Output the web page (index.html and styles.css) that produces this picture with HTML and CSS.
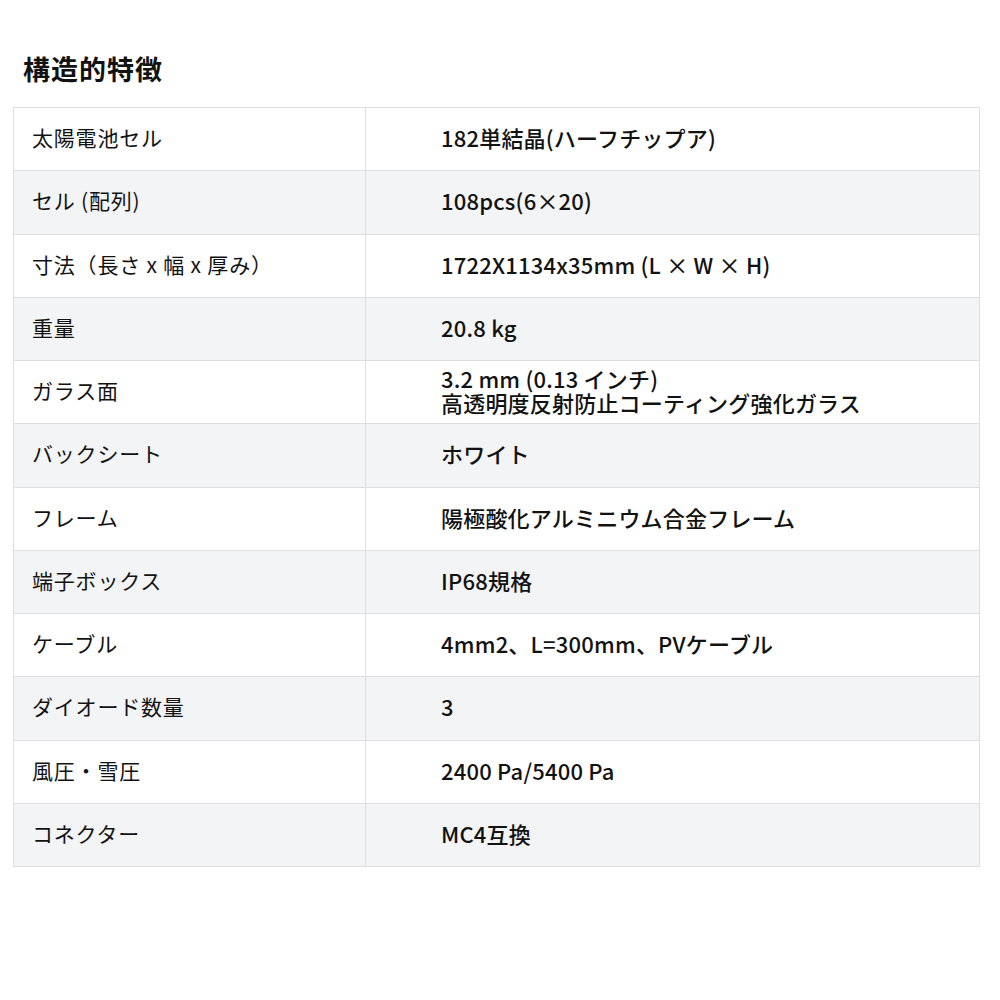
FILE: index.html
```html
<!DOCTYPE html>
<html lang="ja">
<head>
<meta charset="utf-8">
<link rel="stylesheet" href="styles.css">
</head>
<body>
<div class="page">
  <h1 class="title">構造的特徴</h1>
  <div class="spec">
    <div class="row"><div class="key">太陽電池セル</div><div class="val">182単結晶(ハーフチップア)</div></div>
    <div class="row alt"><div class="key">セル (配列)</div><div class="val">108pcs(6×20)</div></div>
    <div class="row"><div class="key">寸法（長さ x 幅 x 厚み）</div><div class="val">1722X1134x35mm (L × W × H)</div></div>
    <div class="row alt"><div class="key">重量</div><div class="val">20.8 kg</div></div>
    <div class="row"><div class="key">ガラス面</div><div class="val">3.2 mm (0.13 インチ)<br>高透明度反射防止コーティング強化ガラス</div></div>
    <div class="row alt"><div class="key">バックシート</div><div class="val">ホワイト</div></div>
    <div class="row"><div class="key">フレーム</div><div class="val">陽極酸化アルミニウム合金フレーム</div></div>
    <div class="row alt"><div class="key">端子ボックス</div><div class="val">IP68規格</div></div>
    <div class="row"><div class="key">ケーブル</div><div class="val">4mm2、L=300mm、PVケーブル</div></div>
    <div class="row alt"><div class="key">ダイオード数量</div><div class="val">3</div></div>
    <div class="row"><div class="key">風圧・雪圧</div><div class="val">2400 Pa/5400 Pa</div></div>
    <div class="row alt"><div class="key">コネクター</div><div class="val">MC4互換</div></div>
  </div>
</div>
</body>
</html>
```
FILE: styles.css
```css
html, body {
  margin: 0;
  padding: 0;
  background: #ffffff;
}
body {
  font-family: "Noto Sans CJK JP", "Noto Sans", sans-serif;
  color: #121212;
}
.page {
  padding: 51px 20px 0 13px;
}
.title {
  margin: 0 0 20px 0;
  padding-left: 10px;
  font-size: 27px;
  line-height: 36px;
  font-weight: 700;
  letter-spacing: 1px;
}
.spec {
  width: 967px;
  border: 1px solid #dcdfe2;
  border-bottom: none;
  box-sizing: border-box;
}
.row {
  display: grid;
  grid-template-columns: 352px 1fr;
  height: 63.25px;
  border-bottom: 1px solid #dcdfe2;
  box-sizing: border-box;
  background: #ffffff;
}
.row.alt {
  background: #f2f4f5;
}
.key {
  display: flex;
  align-items: center;
  padding: 0 0 4px 18px;
  border-right: 1px solid #dcdfe2;
  font-size: 21px;
  font-weight: 400;
  letter-spacing: 0.8px;
}
.val {
  display: flex;
  align-items: center;
  padding: 0 0 4px 75px;
  font-size: 22px;
  line-height: 24px;
  font-weight: 500;
  letter-spacing: 0.2px;
}
```
